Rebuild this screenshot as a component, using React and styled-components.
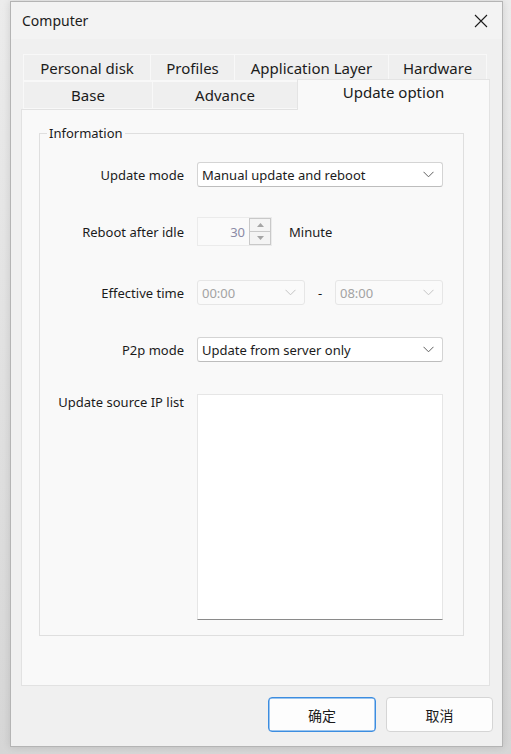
import React from "react";
import styled, { createGlobalStyle } from "styled-components";

const Global = createGlobalStyle`
  html, body { margin: 0; padding: 0; }
  body {
    background: linear-gradient(#ececec, #d6d6d6);
    height: 754px;
    overflow: hidden;
    font-family: "Noto Sans", "Noto Sans CJK SC", sans-serif;
    color: #1b1b1b;
  }
`;

const Window = styled.div`
  box-sizing: border-box;
  margin: 1px 0 0 10px;
  width: 493px;
  height: 746px;
  border: 1px solid #b4b4b4;
  background: #f0f0f0;
  display: flex;
  flex-direction: column;
  box-shadow: 0 0 8px rgba(0, 0, 0, 0.12);
`;

const TitleBar = styled.div`
  height: 37px;
  flex: none;
  display: flex;
  align-items: center;
  justify-content: space-between;
  padding: 0 12px 0 11px;
  background: #f3f3f3;
  font-size: 14px;
`;

const Close = styled.svg`
  width: 14px;
  height: 14px;
  margin-right: 2px;
`;

const Body = styled.div`
  flex: 1;
  display: flex;
  flex-direction: column;
  padding-top: 15px;
`;

const TabArea = styled.div`
  padding: 0 12px 0 10px;
`;

const TabRow = styled.div`
  display: flex;
  padding-left: 2px;
  height: ${(p) => p.$h}px;
  position: relative;
  z-index: ${(p) => p.$z || 1};
`;

const Tab = styled.div`
  box-sizing: border-box;
  flex: none;
  width: ${(p) => p.$w}px;
  height: 100%;
  display: flex;
  align-items: center;
  justify-content: center;
  font-size: 15px;
  background: #efefef;
  border: 1px solid #f8f8f8;
  border-right: none;
  &:last-child { border-right: 1px solid #f8f8f8; }
`;

const ActiveTab = styled.div`
  box-sizing: border-box;
  flex: none;
  width: ${(p) => p.$w}px;
  height: calc(100% + 3px);
  margin-top: -2px;
  padding-bottom: 6px;
  display: flex;
  align-items: center;
  justify-content: center;
  font-size: 15px;
  background: #f9f9f9;
  border: 1px solid #e4e4e4;
  border-bottom: none;
  position: relative;
  z-index: 3;
`;

const Panel = styled.div`
  box-sizing: border-box;
  height: 577px;
  background: #f9f9f9;
  border: 1px solid #e2e2e2;
  padding: 23px 25px 0 17px;
`;

const Group = styled.div`
  box-sizing: border-box;
  position: relative;
  height: 503px;
  border: 1px solid #dfdfdf;
  padding: 28px 20px 0 0;
`;

const Legend = styled.span`
  position: absolute;
  top: -10px;
  left: 7px;
  padding: 0 2px;
  background: #f9f9f9;
  font-size: 13px;
  line-height: 18px;
`;

const Row = styled.div`
  display: grid;
  grid-template-columns: 144px 1fr;
  column-gap: 13px;
  align-items: ${(p) => (p.$top ? "start" : "center")};
  margin-top: ${(p) => p.$mt || 0}px;
`;

const Label = styled.div`
  text-align: right;
  font-size: 13px;
  line-height: 18px;
  margin-top: ${(p) => (p.$top ? -1 : 0)}px;
`;

const Controls = styled.div`
  display: flex;
  align-items: center;
`;

const Combo = styled.div`
  box-sizing: border-box;
  width: ${(p) => p.$w || 246}px;
  height: 25px;
  display: flex;
  align-items: center;
  justify-content: space-between;
  padding: 0 8px 0 4px;
  border-radius: 3px;
  font-size: 13px;
  background: ${(p) => (p.$disabled ? "#fafafa" : "#ffffff")};
  border: 1px solid ${(p) => (p.$disabled ? "#e6e6e6" : "#d4d4d4")};
  border-bottom-color: ${(p) => (p.$disabled ? "#e6e6e6" : "#bdbdbd")};
  color: ${(p) => (p.$disabled ? "#a3a3a3" : "#1b1b1b")};
`;

const Chevron = styled.svg`
  width: 11px;
  height: 7px;
  flex: none;
`;

const Spin = styled.div`
  box-sizing: border-box;
  width: 75px;
  height: 29px;
  display: flex;
  border: 1px solid #ebebeb;
  background: #fafafa;
`;

const SpinValue = styled.div`
  flex: 1;
  display: flex;
  align-items: center;
  justify-content: flex-end;
  padding-right: 4px;
  font-size: 13px;
  color: #8b8ba6;
`;

const SpinButtons = styled.div`
  width: 21px;
  display: flex;
  flex-direction: column;
  border-left: 1px solid #c9c9c9;
`;

const SpinBtn = styled.div`
  flex: 1;
  display: flex;
  align-items: center;
  justify-content: center;
  border-bottom: 1px solid #c9c9c9;
  border-right: 1px solid #c9c9c9;
  background: #f4f4f4;
  &:first-child { border-top: 1px solid #c9c9c9; }
`;

const Unit = styled.span`
  font-size: 13px;
  margin-left: 17px;
`;

const Dash = styled.span`
  font-size: 13px;
  width: 30px;
  text-align: center;
`;

const TextArea = styled.div`
  box-sizing: border-box;
  width: 246px;
  height: 226px;
  background: #ffffff;
  border: 1px solid #e6e6e6;
  border-bottom: 1px solid #8a8a8a;
`;

const Footer = styled.div`
  display: flex;
  justify-content: flex-end;
  gap: 10px;
  padding: 11px 9px 0 0;
`;

const Button = styled.button`
  box-sizing: border-box;
  width: ${(p) => (p.$primary ? 108 : 107)}px;
  height: 35px;
  border-radius: 4px;
  background: #fdfdfd;
  border: 1px solid ${(p) => (p.$primary ? "#3c8de0" : "#d5d5d5")};
  box-shadow: ${(p) => (p.$primary ? "inset 0 0 0 0.5px #3c8de0" : "none")};
  font-family: "Noto Sans CJK SC", sans-serif;
  font-size: 14px;
  color: #1b1b1b;
  padding: 0;
`;

const ChevronIcon = ({ light }) => (
  <Chevron viewBox="0 0 11 7">
    <path d="M0.5 0.8 L5.5 5.8 L10.5 0.8" fill="none" stroke={light ? "#c4c4c4" : "#5f5f5f"} strokeWidth="1" />
  </Chevron>
);

const Tri = ({ up }) => (
  <svg width="7" height="4" viewBox="0 0 7 4">
    <path d={up ? "M0 4 L3.5 0 L7 4 Z" : "M0 0 L3.5 4 L7 0 Z"} fill="#a5a5a5" />
  </svg>
);

export default function App() {
  return (
    <>
      <Global />
      <Window>
        <TitleBar>
          <span>Computer</span>
          <Close viewBox="0 0 14 14">
            <path d="M1 1 L13 13 M13 1 L1 13" stroke="#1b1b1b" strokeWidth="1.1" />
          </Close>
        </TitleBar>
        <Body>
          <TabArea>
            <TabRow $h={27}>
              <Tab $w={127}>Personal disk</Tab>
              <Tab $w={84}>Profiles</Tab>
              <Tab $w={154}>Application Layer</Tab>
              <Tab $w={99}>Hardware</Tab>
            </TabRow>
            <TabRow $h={28} $z={2}>
              <Tab $w={129}>Base</Tab>
              <Tab $w={145}>Advance</Tab>
              <ActiveTab $w={193}>Update option</ActiveTab>
            </TabRow>
            <Panel>
              <Group>
                <Legend>Information</Legend>
                <Row>
                  <Label>Update mode</Label>
                  <Combo>
                    <span>Manual update and reboot</span>
                    <ChevronIcon />
                  </Combo>
                </Row>
                <Row $mt={30}>
                  <Label>Reboot after idle</Label>
                  <Controls>
                    <Spin>
                      <SpinValue>30</SpinValue>
                      <SpinButtons>
                        <SpinBtn><Tri up /></SpinBtn>
                        <SpinBtn><Tri /></SpinBtn>
                      </SpinButtons>
                    </Spin>
                    <Unit>Minute</Unit>
                  </Controls>
                </Row>
                <Row $mt={34}>
                  <Label>Effective time</Label>
                  <Controls>
                    <Combo $w={108} $disabled>
                      <span>00:00</span>
                      <ChevronIcon light />
                    </Combo>
                    <Dash>-</Dash>
                    <Combo $w={108} $disabled>
                      <span>08:00</span>
                      <ChevronIcon light />
                    </Combo>
                  </Controls>
                </Row>
                <Row $mt={32}>
                  <Label>P2p mode</Label>
                  <Combo>
                    <span>Update from server only</span>
                    <ChevronIcon />
                  </Combo>
                </Row>
                <Row $mt={32} $top>
                  <Label $top>Update source IP list</Label>
                  <TextArea />
                </Row>
              </Group>
            </Panel>
          </TabArea>
          <Footer>
            <Button $primary>确定</Button>
            <Button>取消</Button>
          </Footer>
        </Body>
      </Window>
    </>
  );
}
